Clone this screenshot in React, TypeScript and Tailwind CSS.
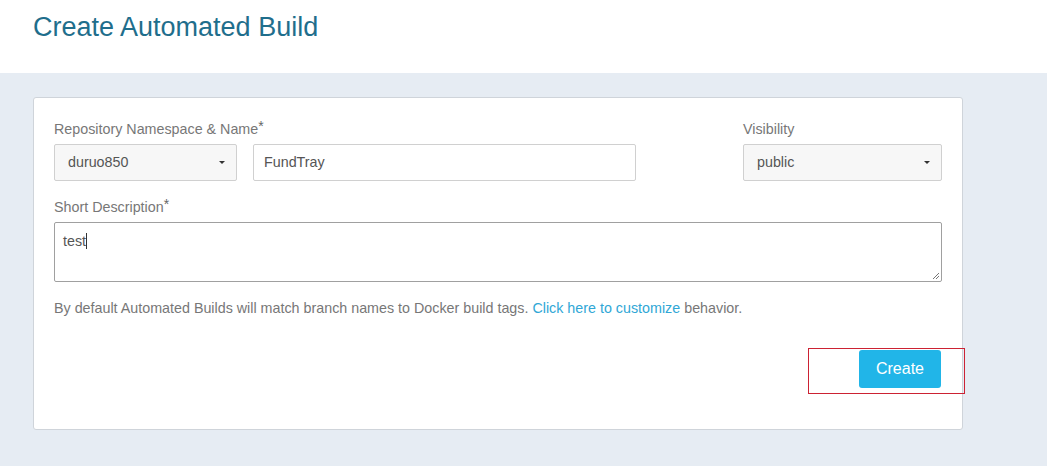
import React from "react"

const Caret = () => (
    <span className="block w-0 h-0 border-l-[3px] border-r-[3px] border-t-[3px] border-l-transparent border-r-transparent border-t-[#333]" />
)

const SelectBox = ({ value, className }: { value: string; className: string }) => (
    <div className={`h-[37px] flex items-center justify-between pl-[13px] pr-[11px] bg-[#f7f7f7] border border-[#d0d0d0] rounded-[2px] text-[14.3px] text-[#555] ${className}`}>
        <span>{value}</span>
        <Caret />
    </div>
)

const Label = ({ children, required }: { children: React.ReactNode; required?: boolean }) => (
    <div className="h-[20px] leading-[20px] text-[14.3px] text-[#777]">
        {children}
        {required && <span className="relative top-[-3px] text-[14px] text-[#666]">*</span>}
    </div>
)

export default function App() {
    return (
        <div className="w-[1047px] h-[466px] bg-[#e6ecf3] font-['Liberation_Sans',Arial,sans-serif] overflow-hidden">
            <div className="h-[73px] bg-white pl-[33px] pt-[10px]">
                <h1 className="text-[27px] leading-[34px] text-[#1f6e8c]">Create Automated Build</h1>
            </div>
            <div className="pt-[24px] pl-[33px]">
                <div className="relative w-[930px] h-[333px] bg-white border border-[#cfd4da] rounded-[3px] px-[20px] pt-[21px]">
                    <div className="flex">
                        <div className="flex flex-col">
                            <Label required>Repository Namespace &amp; Name</Label>
                            <div className="flex gap-[16px] mt-[5px]">
                                <SelectBox value="duruo850" className="w-[183px]" />
                                <div className="w-[383px] h-[37px] flex items-center pl-[10px] border border-[#d0d0d0] rounded-[2px] text-[14.3px] text-[#555]">
                                    FundTray
                                </div>
                            </div>
                        </div>
                        <div className="flex flex-col ml-auto">
                            <Label>Visibility</Label>
                            <SelectBox value="public" className="w-[199px] mt-[5px]" />
                        </div>
                    </div>
                    <div className="mt-[16px]">
                        <Label required>Short Description</Label>
                        <div className="relative mt-[5px] h-[60px] border border-[#a0a0a0] rounded-[2px] pl-[8px] pt-[10px] text-[14.3px] leading-[17px] text-[#555]">
                            test<span className="inline-block w-[1px] h-[16px] bg-[#333] align-[-3px]" />
                            <svg className="absolute right-[1px] bottom-[1px]" width="10" height="10" viewBox="0 0 10 10">
                                <path d="M9 3 L3 9 M9 6 L6 9" stroke="#777" strokeWidth="1" />
                            </svg>
                        </div>
                    </div>
                    <p className="mt-[16px] h-[20px] leading-[20px] text-[14.3px] text-[#777]">
                        By default Automated Builds will match branch names to Docker build tags.{" "}
                        <span className="text-[#30a7d6]">Click here to customize</span> behavior.
                    </p>
                    <div className="flex justify-end mt-[32px]">
                        <button className="w-[82px] h-[38px] mr-[1px] bg-[#21b5e8] rounded-[3px] text-white text-[16px]">
                            Create
                        </button>
                    </div>
                    <div className="absolute left-[774px] top-[250px] w-[157px] h-[46px] border border-[#cc2233]" />
                </div>
            </div>
        </div>
    )
}
